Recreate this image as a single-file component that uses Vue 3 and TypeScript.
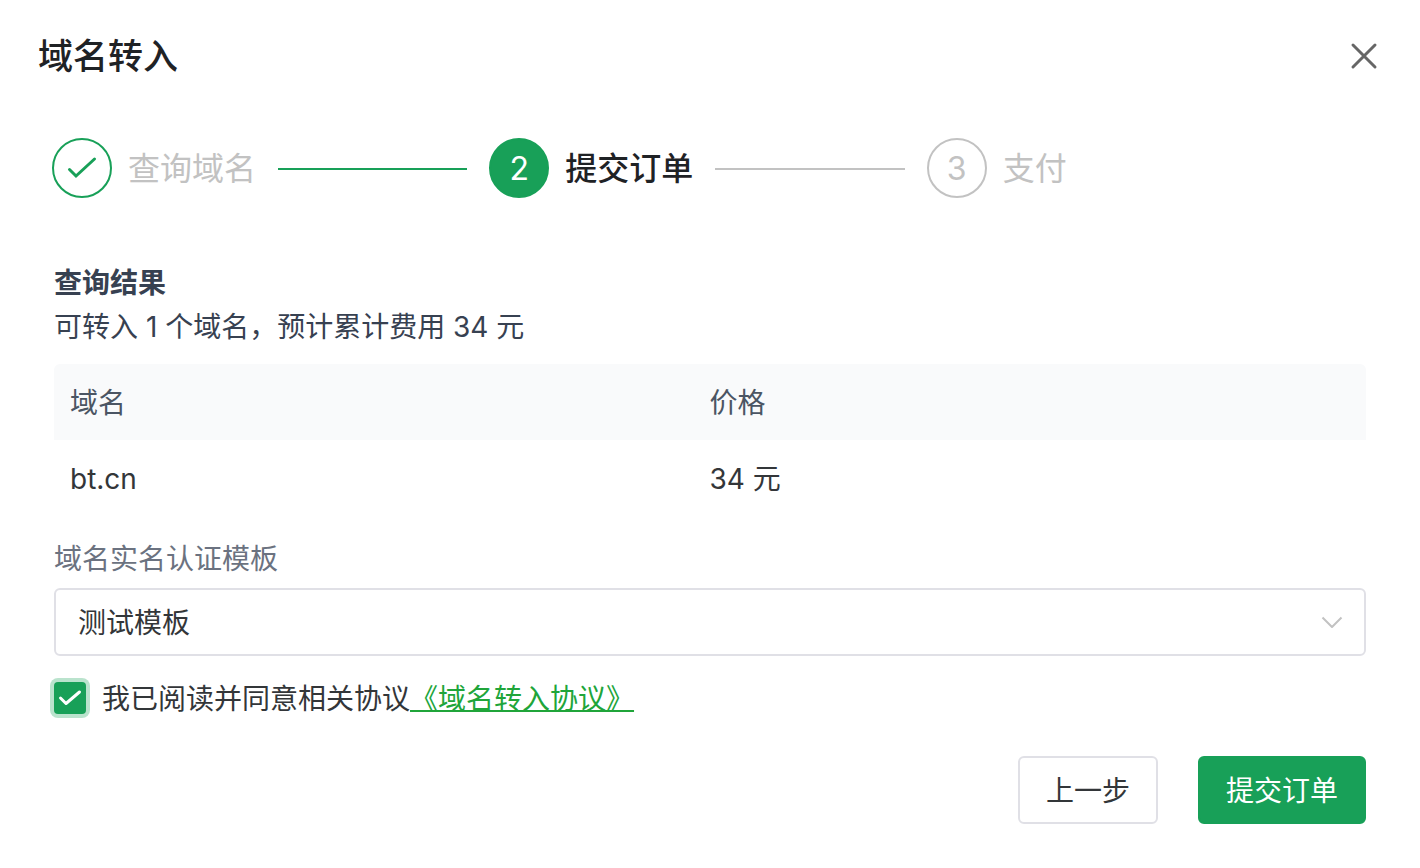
<script setup lang="ts">
import { ref } from 'vue'

interface Step {
  title: string
  state: 'finish' | 'process' | 'wait'
}

interface DomainRow {
  name: string
  price: number
}

const steps: Step[] = [
  { title: '查询域名', state: 'finish' },
  { title: '提交订单', state: 'process' },
  { title: '支付', state: 'wait' },
]
const rows: DomainRow[] = [{ name: 'bt.cn', price: 34 }]
const templates: string[] = ['测试模板']
const template = ref<string>(templates[0])
const agreed = ref<boolean>(true)
</script>

<template>
  <main class="dialog">
    <header class="header">
      <h1 class="title">域名转入</h1>
      <button class="close" type="button" aria-label="关闭">
        <svg viewBox="0 0 28 28" width="28" height="28" aria-hidden="true">
          <path d="M3 3 25 25M25 3 3 25" fill="none" stroke="#666" stroke-width="3" stroke-linecap="round" />
        </svg>
      </button>
    </header>

    <ol class="steps">
      <li v-for="(step, index) in steps" :key="step.title" class="step" :class="step.state">
        <span class="indicator">
          <svg v-if="step.state === 'finish'" viewBox="0 0 32 32" width="32" height="32" aria-hidden="true">
            <path d="M3.5 17.5 10 24 28.5 7" fill="none" stroke="currentColor" stroke-width="3" stroke-linecap="round" />
          </svg>
          <template v-else>{{ index + 1 }}</template>
        </span>
        <span class="step-title">{{ step.title }}</span>
        <span v-if="index < steps.length - 1" class="line"></span>
      </li>
    </ol>

    <section class="content">
      <h2 class="result-title">查询结果</h2>
      <p class="summary">可转入 1 个域名，预计累计费用 34 元</p>

      <table class="table">
        <thead>
          <tr>
            <th class="name-col" scope="col">域名</th>
            <th scope="col">价格</th>
          </tr>
        </thead>
        <tbody>
          <tr v-for="row in rows" :key="row.name">
            <td>{{ row.name }}</td>
            <td>{{ row.price }} 元</td>
          </tr>
        </tbody>
      </table>

      <label class="field-label" for="template">域名实名认证模板</label>
      <div class="select-wrap">
        <select id="template" v-model="template" class="select">
          <option v-for="item in templates" :key="item" :value="item">{{ item }}</option>
        </select>
        <svg class="chevron" viewBox="0 0 24 16" width="24" height="16" aria-hidden="true">
          <path d="M2.5 3.5 12 13 21.5 3.5" fill="none" stroke="#c2c2c2" stroke-width="2" stroke-linejoin="round" />
        </svg>
      </div>

      <div class="agreement">
        <span class="check-wrap">
          <input id="agree" v-model="agreed" class="checkbox" type="checkbox" />
          <svg v-if="agreed" class="tick" viewBox="0 0 32 32" width="32" height="32" aria-hidden="true">
            <path d="M6.5 16 12 21.5 25.5 10" fill="none" stroke="#fff" stroke-width="3" stroke-linecap="round" stroke-linejoin="round" />
          </svg>
        </span>
        <span class="agree-text">
          <label for="agree">我已阅读并同意相关协议</label><a class="link" href="#agreement">《域名转入协议》</a>
        </span>
      </div>

      <footer class="actions">
        <button class="btn" type="button">上一步</button>
        <button class="btn primary" type="button">提交订单</button>
      </footer>
    </section>
  </main>
</template>

<style>
body {
  margin: 0;
  background: #fff;
}
</style>

<style scoped>
.dialog {
  box-sizing: border-box;
  padding: 28px 54px 44px;
  background: #fff;
  color: #333639;
  font-family: Inter, "Noto Sans CJK SC", sans-serif;
  font-size: 28px;
  line-height: 44px;
}

.header {
  display: flex;
  align-items: center;
  justify-content: space-between;
  margin: 0 -12px 0 -16px;
}

.title {
  margin: 0;
  color: #1f2225;
  font-size: 35px;
  font-weight: 500;
  line-height: 56px;
}

.close {
  display: flex;
  padding: 0;
  border: 0;
  background: none;
  cursor: pointer;
}

.steps {
  display: flex;
  margin: 54px 2px 62px -2px;
  padding: 0;
  list-style: none;
}

.step {
  display: flex;
  flex: 1;
  align-items: center;
  color: #c2c2c2;
  font-size: 32px;
}

.indicator {
  box-sizing: border-box;
  display: flex;
  flex: none;
  align-items: center;
  justify-content: center;
  width: 60px;
  height: 60px;
  margin-right: 16px;
  padding-top: 2px;
  border: 2px solid #c2c2c2;
  border-radius: 50%;
}

.step-title {
  padding-top: 2px;
}

.finish .indicator {
  padding-top: 0;
  border-color: #18a058;
  color: #18a058;
}

.process .indicator {
  border-color: #18a058;
  background: #18a058;
  color: #fff;
}

.process .step-title {
  color: #1f2225;
  font-weight: 500;
}

.line {
  flex: 1;
  height: 2px;
  margin: 2px 22px 0;
  background: #c2c2c2;
}

.finish .line {
  background: #18a058;
}

.result-title,
.summary {
  margin: 0;
  color: #374151;
  font-size: 28px;
}

.result-title {
  padding-top: 1px;
  font-weight: 700;
}

.table {
  width: 100%;
  margin: 15px 0 20px;
  border-collapse: separate;
  border-spacing: 0;
  table-layout: fixed;
}

.table th,
.table td {
  padding: 17px 16px 15px;
  text-align: left;
  font-weight: 400;
}

.table th {
  background: #f9fafb;
  color: #4b5563;
}

.table th:first-child {
  border-top-left-radius: 6px;
}

.table th:last-child {
  border-top-right-radius: 6px;
}

.table .name-col {
  width: 46.3%;
}

.field-label {
  display: block;
  padding-top: 1px;
  margin-bottom: 7px;
  color: #6b7280;
}

.select-wrap {
  display: grid;
  align-items: center;
}

.select {
  grid-area: 1 / 1;
  box-sizing: border-box;
  width: 100%;
  height: 68px;
  padding: 2px 60px 0 22px;
  border: 2px solid #e0e0e6;
  border-radius: 6px;
  background: #fff;
  color: #333639;
  font: inherit;
  appearance: none;
}

.chevron {
  grid-area: 1 / 1;
  justify-self: end;
  margin-right: 22px;
  pointer-events: none;
}

.agreement {
  display: flex;
  align-items: center;
  margin: 19px 0 35px;
}

.agree-text {
  padding-top: 2px;
}

.check-wrap {
  display: grid;
  margin-right: 16px;
}

.checkbox {
  grid-area: 1 / 1;
  width: 32px;
  height: 32px;
  margin: 0;
  border-radius: 4px;
  background: #fff;
  box-shadow: 0 0 0 4px #bae3cd;
  appearance: none;
}

.checkbox:checked {
  background: #18a058;
}

.tick {
  grid-area: 1 / 1;
  pointer-events: none;
}

.link {
  color: #20a53a;
  text-decoration: underline;
  text-decoration-thickness: 2px;
  text-decoration-skip-ink: none;
  text-underline-offset: 1px;
}

.actions {
  display: flex;
  justify-content: flex-end;
  gap: 40px;
}

.btn {
  box-sizing: border-box;
  height: 68px;
  padding: 2px 26px 0;
  border: 2px solid #e0e0e6;
  border-radius: 6px;
  background: #fff;
  color: #333639;
  font: inherit;
  cursor: pointer;
}

.primary {
  border-color: #18a058;
  background: #18a058;
  color: #fff;
}
</style>
